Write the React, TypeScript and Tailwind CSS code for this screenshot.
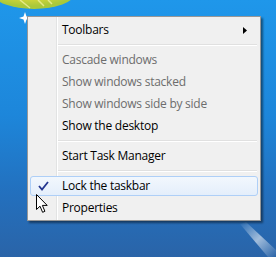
type Item = { label: string; disabled?: boolean; submenu?: boolean; checked?: boolean } | 'sep';

const items: Item[] = [
  { label: 'Toolbars', submenu: true },
  'sep',
  { label: 'Cascade windows', disabled: true },
  { label: 'Show windows stacked', disabled: true },
  { label: 'Show windows side by side', disabled: true },
  { label: 'Show the desktop' },
  'sep',
  { label: 'Start Task Manager' },
  'sep',
  { label: 'Lock the taskbar', checked: true },
  { label: 'Properties' },
];

// desktop pointer over the menu
function Cursor() {
  return (
    <svg width="13" height="20" viewBox="0 0 13 20" className="absolute left-[36px] top-[194px]">
      <path
        d="M0.5 0.5 L0.5 15.5 L4 12.2 L6.6 18.3 L8.9 17.3 L6.4 11.4 L11.2 11.4 Z"
        fill="#fff"
        stroke="#000"
        strokeWidth="1"
      />
    </svg>
  );
}

function Wallpaper() {
  return (
    <svg width="276" height="257" className="absolute inset-0">
      <defs>
        <radialGradient id="blob" cx="0.45" cy="0.2" r="0.7">
          <stop offset="0" stopColor="#f4f27a" />
          <stop offset="0.6" stopColor="#d9d83a" />
          <stop offset="1" stopColor="#a9c83a" />
        </radialGradient>
        <linearGradient id="streak" x1="0" y1="0" x2="1" y2="1">
          <stop offset="0" stopColor="#ffffff" stopOpacity="0" />
          <stop offset="0.5" stopColor="#ffffff" stopOpacity="0.7" />
          <stop offset="1" stopColor="#ffffff" stopOpacity="0" />
        </linearGradient>
      </defs>
      <ellipse cx="34" cy="-6" rx="40" ry="15" fill="url(#blob)" />
      <path d="M20 0 L30 8 M38 0 L44 6 M48 0 L52 4" stroke="#f8f6a8" strokeWidth="1.5" opacity="0.7" />
      <path d="M25 12 L26.5 16.5 L31 18 L26.5 19.5 L25 24 L23.5 19.5 L19 18 L23.5 16.5 Z" fill="#ffffff" />
      <path d="M246 222 L276 250 L276 257 L268 257 L240 224 Z" fill="url(#streak)" opacity="0.8" />
    </svg>
  );
}

function MenuRow({ item }: { item: Exclude<Item, 'sep'> }) {
  const row = item.checked
    ? 'mx-[2px] my-[1px] h-[20px] rounded-[3px] border border-[#aecff7] bg-[linear-gradient(180deg,#f2f7fd,#e4eefb)]'
    : 'h-[22px]';
  return (
    <div className={`flex items-center ${row}`}>
      <div className={`flex justify-center ${item.checked ? 'w-[25px]' : 'w-[28px]'}`}>
        {item.checked && (
          <svg width="11" height="10" viewBox="0 0 11 10">
            <path d="M1 5 L4 8.5 L10 1" fill="none" stroke="#24368f" strokeWidth="1.8" />
          </svg>
        )}
      </div>
      <span
        className={`flex-1 pl-[6px] text-[12px] leading-none tracking-[-0.25px] ${item.disabled ? 'text-[#6d6d6d]' : 'text-black'}`}
      >
        {item.label}
      </span>
      {item.submenu && (
        <svg width="4" height="7" viewBox="0 0 4 7" className="mr-[13px]">
          <path d="M0 0 L4 3.5 L0 7 Z" fill="#000" />
        </svg>
      )}
    </div>
  );
}

export default function App() {
  return (
    <div className="relative h-[257px] w-[276px] overflow-hidden bg-[linear-gradient(180deg,#1f97ea_0%,#1d86da_45%,#2370be_75%,#2a64a8_100%)] font-['Open_Sans',sans-serif]">
      <Wallpaper />
      <div className="absolute left-[27px] top-[16px] flex w-[234px] flex-col border border-[#979797] bg-[linear-gradient(90deg,#f0f0f0_0px,#f0f0f0_28px,#e2e3e3_28px,#e2e3e3_29px,#ffffff_29px,#ffffff_30px,#f0f0f0_30px)] pb-[1px] pt-[2px] shadow-[2px_2px_2px_rgba(0,0,0,0.45)]">
        {items.map((item, i) =>
          item === 'sep' ? (
            <div key={i} className="ml-[30px] mr-[3px] mt-[3px] mb-[3px] h-[2px] border-b border-t border-b-white border-t-[#e0e0e0]" />
          ) : (
            <MenuRow key={i} item={item} />
          ),
        )}
      </div>
      <Cursor />
    </div>
  );
}
